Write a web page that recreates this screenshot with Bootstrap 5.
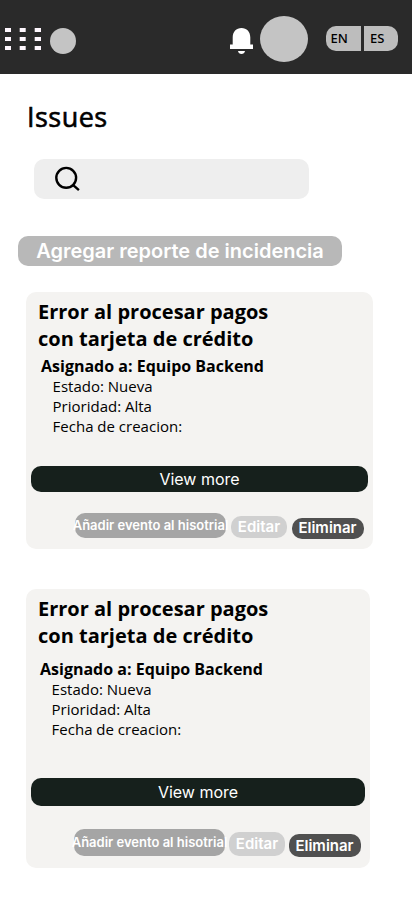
<!DOCTYPE html>
<html lang="es">
<head>
<meta charset="utf-8">
<meta name="viewport" content="width=device-width, initial-scale=1">
<title>Issues</title>
<link href="https://cdn.jsdelivr.net/npm/bootstrap@5.3.0/dist/css/bootstrap.min.css" rel="stylesheet">
<style>
body{font-family:"Open Sans","Noto Sans",sans-serif;color:#000;background:#fff;overflow:hidden}
.topbar{height:74px;background:#2a2a2a;padding-left:5px;padding-right:14px}
.menu-dots{width:37px;height:22px;margin-top:28px}
.brand-dot{width:26px;height:26px;margin-top:28px;margin-left:8px;background:#c4c4c4}
.bell{width:23px;height:27px;margin-top:28px}
.avatar{width:48px;height:46px;margin:16px 18px 0 7px;background:#c4c4c4}
.lang{height:24.5px;margin-top:26px;border-radius:10px;gap:3px;font-size:13px;font-weight:500;line-height:24px;font-family:"Noto Sans","Open Sans",sans-serif}
.lang span{background:#bdbdbd}
.lang span:first-child{width:34.5px;padding-left:4.5px}
.lang span:last-child{width:34.5px;padding-left:6.5px}
.page-title{font-size:27px;font-weight:400;-webkit-text-stroke:.6px #000;letter-spacing:.45px;line-height:36px;margin:25px 0 0 27px}
.search{width:275px;height:40px;margin:24px 0 0 34px;padding:7px 0 0 20px;border-radius:10px;background:#eee}
.search svg{display:block}
.inter{font-family:Inter,sans-serif;border:0;padding:0;white-space:nowrap;display:flex;justify-content:center;align-items:center;color:#fff;border-radius:10px;font-weight:600;flex:none}
.add{width:324px;height:30px;margin:37px 0 0 18px;background:#b8b8b8;font-size:20px}
.issue{border:0;border-radius:10px;background:#f4f3f1;margin-left:26px;color:#000}
.issue h2{font-size:20px;font-weight:700;line-height:27px;margin:6px 0 0 12px}
.assignee{font-size:16px;font-weight:700;line-height:20px}
.facts{font-size:15px;line-height:20px}
.more{background:#16201c;font-size:16px;font-weight:400;margin-left:5px}
.log{background:#a5a5a5;font-size:13px;width:151px;padding-top:1px}
.edit{background:#d0d0d0;font-size:15px;width:56px}
.del{background:#505050;font-size:15px;width:72px;padding-right:1px}
.first{width:347px;height:257px;margin-top:26px}
.first .assignee{margin:4px 0 0 15px}
.first .facts{margin-left:26.6px}
.first .more{width:337px;height:26px;margin-top:30px}
.first .actions{margin:21px 0 0 49px}
.first .log{height:25px}
.first .edit{height:22px;margin:3px 0 0 5px}
.first .del{height:21px;margin:5px 0 0 5px}
.second{width:344px;height:279px;margin-top:40px}
.second .assignee{margin:10px 0 0 14px}
.second .facts{margin-left:25.6px}
.second .more{width:334px;height:28px;margin-top:39px}
.second .actions{margin:23px 0 0 48px}
.second .log{height:27px}
.second .edit{height:24px;margin:3px 0 0 4px}
.second .del{height:23px;margin:5px 0 0 4px;padding-top:1px}
</style>
</head>
<body>
<header class="topbar d-flex align-items-start">
  <svg class="menu-dots" viewBox="0 0 37 22" fill="#fff8ff"><path d="M0 0h6v4H0zM14.700 0h6v4h-6zM29.700 0h6.300v4h-6.300zM0 9h6v4H0zM14.700 9h6v4h-6zM29.700 9h6.300v4h-6.300zM0 18h6v4H0zM14.700 18h6v4h-6zM29.700 18h6.300v4h-6.300z"/></svg>
  <div class="brand-dot rounded-circle"></div>
  <svg class="bell ms-auto" viewBox="0 0 23 27" fill="#fff"><path d="M2.700 16.500V9.500C2.700 3.800 6.300 0 11.500 0s8.800 3.800 8.800 9.500v7h2.700V21H0v-4.500zM8 23h7c-.4 4-6.600 4-7 0z"/></svg>
  <div class="avatar rounded-circle"></div>
  <div class="lang d-flex overflow-hidden"><span>EN</span><span>ES</span></div>
</header>
<main>
  <h1 class="page-title">Issues</h1>
  <div class="search">
    <svg width="27" height="27" viewBox="0 0 27 27" fill="none" stroke="#000" stroke-width="2.400"><circle cx="12.200" cy="11.800" r="9.900"/><path d="M18.600 18.600l6.300 5.600"/></svg>
  </div>
  <button class="btn inter add">Agregar reporte de incidencia</button>
  <article class="card issue first">
    <h2>Error al procesar pagos<br>con tarjeta de crédito</h2>
    <div class="assignee">Asignado a: Equipo Backend</div>
    <div class="facts"><div>Estado: Nueva</div><div>Prioridad: Alta</div><div>Fecha de creacion:</div></div>
    <button class="btn inter more">View more</button>
    <div class="actions d-flex align-items-start">
      <button class="btn inter log">Añadir evento al hisotrial</button>
      <button class="btn inter edit">Editar</button>
      <button class="btn inter del">Eliminar</button>
    </div>
  </article>
  <article class="card issue second">
    <h2>Error al procesar pagos<br>con tarjeta de crédito</h2>
    <div class="assignee">Asignado a: Equipo Backend</div>
    <div class="facts"><div>Estado: Nueva</div><div>Prioridad: Alta</div><div>Fecha de creacion:</div></div>
    <button class="btn inter more">View more</button>
    <div class="actions d-flex align-items-start">
      <button class="btn inter log">Añadir evento al hisotrial</button>
      <button class="btn inter edit">Editar</button>
      <button class="btn inter del">Eliminar</button>
    </div>
  </article>
</main>
<script src="https://cdn.jsdelivr.net/npm/bootstrap@5.3.0/dist/js/bootstrap.bundle.min.js"></script>
</body>
</html>
